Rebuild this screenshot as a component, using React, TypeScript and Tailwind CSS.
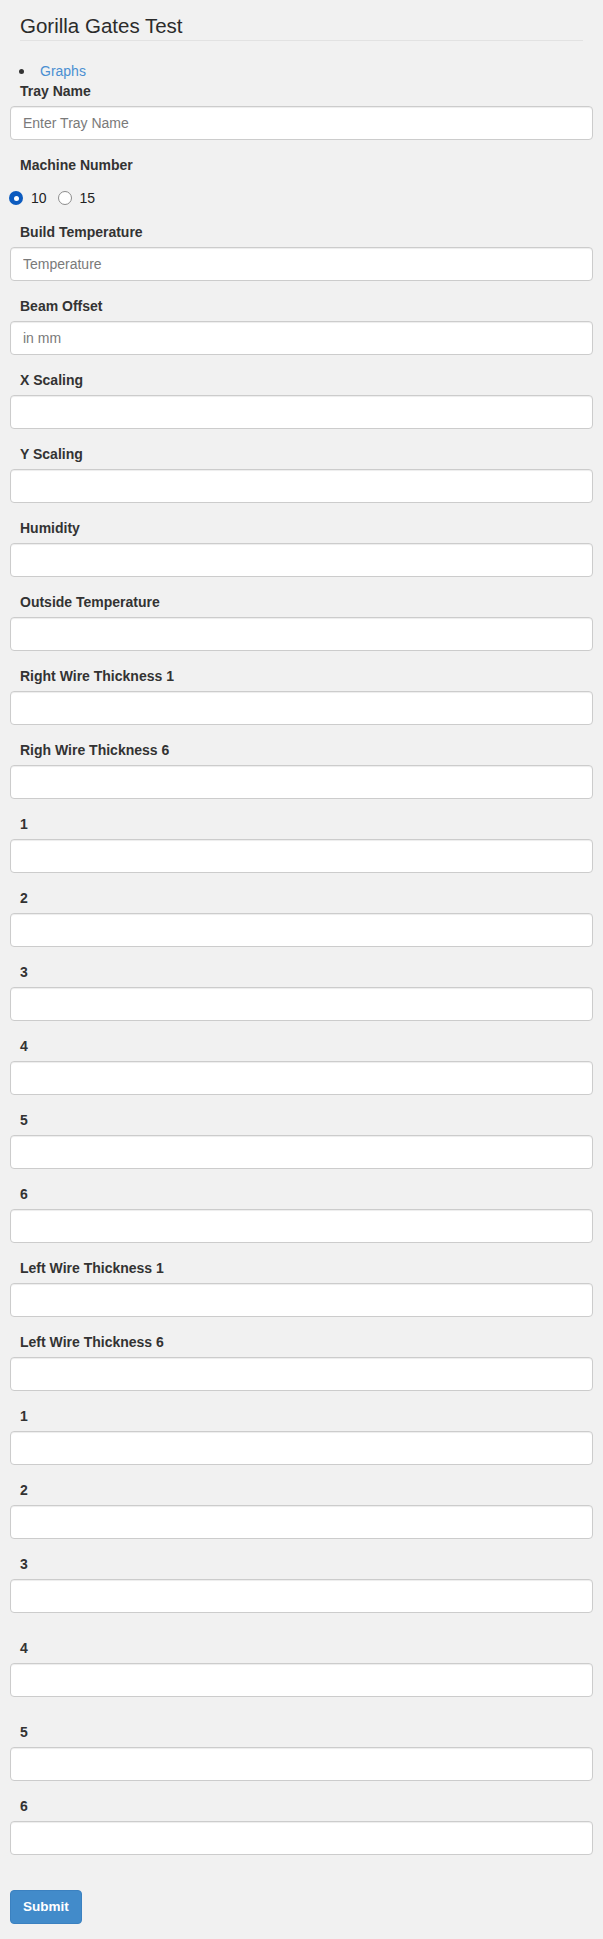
import React from "react";

type Field = { label: string; placeholder?: string; extra?: boolean };

const fields: Field[] = [
  { label: "Build Temperature", placeholder: "Temperature" },
  { label: "Beam Offset", placeholder: "in mm" },
  { label: "X Scaling" },
  { label: "Y Scaling" },
  { label: "Humidity" },
  { label: "Outside Temperature" },
  { label: "Right Wire Thickness 1" },
  { label: "Righ Wire Thickness 6" },
  { label: "1" },
  { label: "2" },
  { label: "3" },
  { label: "4" },
  { label: "5" },
  { label: "6" },
  { label: "Left Wire Thickness 1" },
  { label: "Left Wire Thickness 6" },
  { label: "1" },
  { label: "2" },
  { label: "3" },
  { label: "4", extra: true },
  { label: "5", extra: true },
  { label: "6" },
];

function Input({ placeholder }: { placeholder?: string }) {
  return (
    <input
      type="text"
      placeholder={placeholder}
      className="block w-full h-[34px] px-[12px] bg-white border border-[#cccccc] rounded-[4px] shadow-[inset_0_1px_1px_rgba(0,0,0,0.075)] text-[14px] text-[#555] placeholder:text-[#7a7a7a] outline-none"
    />
  );
}

function Label({ children }: { children: React.ReactNode }) {
  return (
    <label className="block pl-[10px] mb-[5px] h-[20px] leading-[20px] text-[14px] font-bold text-[#333]">
      {children}
    </label>
  );
}

export default function App() {
  return (
    <div
      className="min-h-[1939px] bg-[#f1f1f1] text-[#333]"
      style={{ fontFamily: '"Liberation Sans", Arial, Helvetica, sans-serif' }}
    >
      <div className="mx-[20px] pt-[14px] pb-[2px] border-b border-[#e2e2e2]">
        <h3 className="text-[20.5px] leading-[24px] font-normal text-[#2b2b2b]">
          Gorilla Gates Test
        </h3>
      </div>

      <ul className="mt-[20px] pl-[19px] flex flex-col">
        <li className="flex items-center h-[20px]">
          <span className="w-[5px] h-[5px] rounded-full bg-[#333]" />
          <a href="#" className="ml-[16px] text-[14px] leading-[20px] text-[#4a8fd2]">
            Graphs
          </a>
        </li>
      </ul>

      <form className="px-[10px] pb-[15px]">
        <div className="mb-[15px]">
          <Label>Tray Name</Label>
          <Input placeholder="Enter Tray Name" />
        </div>

        <div>
          <Label>Machine Number</Label>
          <div className="h-[42px] pt-[11px] flex items-start text-[14px] leading-[14px]">
            <div className="flex items-center gap-[8px] -ml-[1px]">
              <span className="w-[14px] h-[14px] rounded-full bg-[#0c5bbf] flex items-center justify-center">
                <span className="w-[5px] h-[5px] rounded-full bg-white" />
              </span>
              <span className="text-[#222]">10</span>
            </div>
            <div className="flex items-center gap-[8px] ml-[11px]">
              <span className="w-[14px] h-[14px] rounded-full bg-white border border-[#8c8c8c]" />
              <span className="text-[#222]">15</span>
            </div>
          </div>
        </div>

        {fields.map((f, i) => (
          <div key={i} className={f.extra ? "pt-[10px] mb-[15px]" : "mb-[15px]"}>
            <Label>{f.label}</Label>
            <Input placeholder={f.placeholder} />
          </div>
        ))}

        <button
          type="button"
          className="block mt-[35px] h-[34px] px-[12px] rounded-[4px] bg-[#428bca] border border-[#3b81c0] text-white text-[13.5px] font-bold"
        >
          Submit
        </button>
      </form>
    </div>
  );
}
